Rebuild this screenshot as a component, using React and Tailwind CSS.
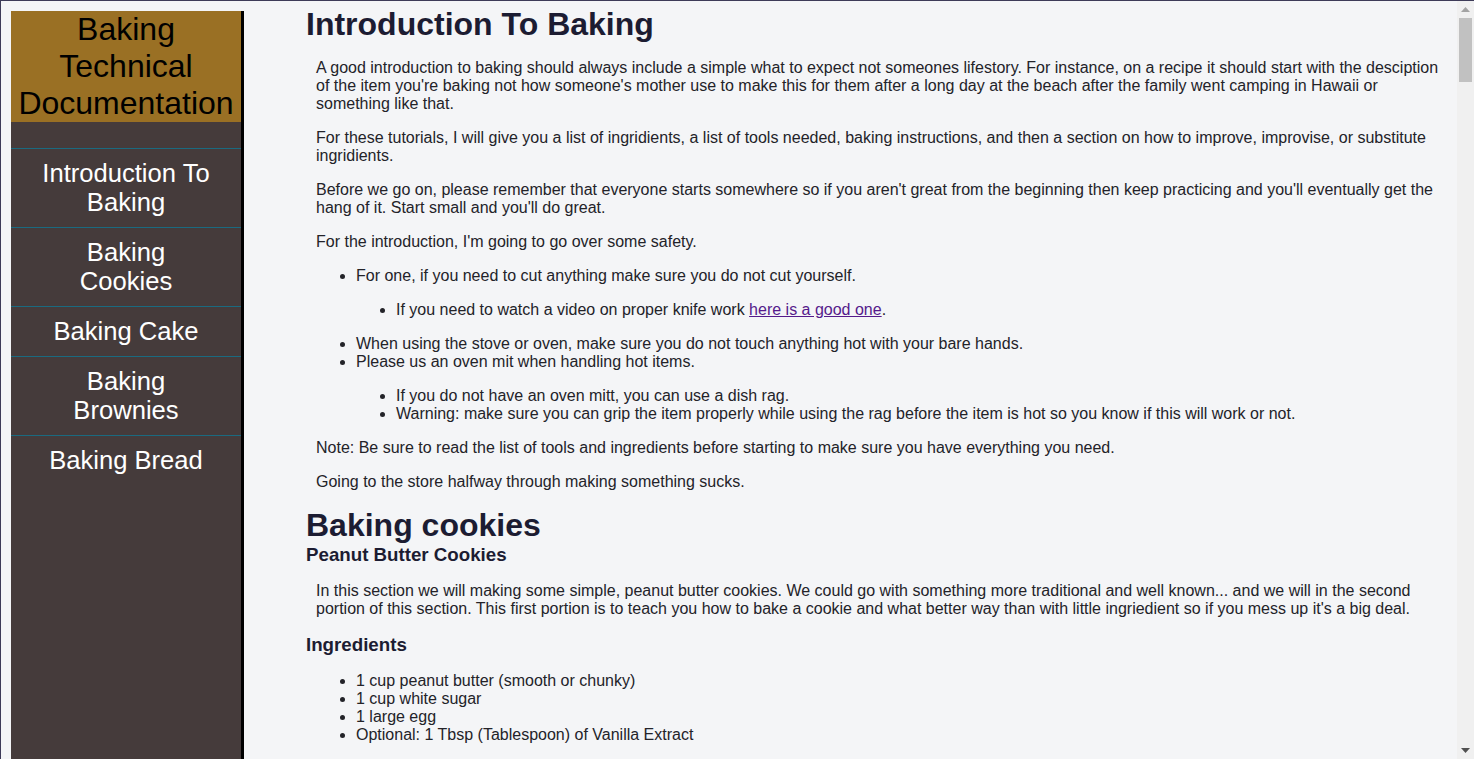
import React from 'react';

const navLinks = [
  'Introduction To Baking',
  'Baking Cookies',
  'Baking Cake',
  'Baking Brownies',
  'Baking Bread',
];

const Scrollbar = () => (
  <div className="w-[17px] shrink-0 bg-[#f0f0f0] flex flex-col">
    <div className="h-[17px] flex items-center justify-center">
      <svg width="9" height="5" viewBox="0 0 9 5">
        <polygon points="0,5 9,5 4.5,0" fill="#a3a3a3" />
      </svg>
    </div>
    <div className="h-[64px] mx-[2px] bg-[#c1c1c1]" />
    <div className="flex-1" />
    <div className="h-[17px] flex items-center justify-center">
      <svg width="9" height="5" viewBox="0 0 9 5">
        <polygon points="0,0 9,0 4.5,5" fill="#505050" />
      </svg>
    </div>
  </div>
);

const App = () => {
  return (
    <div className="h-[759px] w-[1474px] overflow-hidden flex border-t border-l border-[#3d3b58] bg-[#f4f5f7] font-['Liberation_Sans',Arial,sans-serif] text-[16px] leading-[18px] text-[#232329]">
      <div className="flex-1 flex overflow-hidden">
        {/* Sidebar */}
        <nav className="w-[233px] shrink-0 ml-[10px] mt-[10px] bg-[#453b3b] border-r-[3px] border-black flex flex-col">
          <header className="bg-[#9a7024] text-black text-[32px] leading-[37px] text-center">
            Baking Technical Documentation
          </header>
          <ul className="mt-[26px]">
            {navLinks.map((link) => (
              <li
                key={link}
                className="border-t border-[#1a6a80] py-[10px] px-[30px] text-center text-white text-[25.6px] leading-[29px]"
              >
                {link}
              </li>
            ))}
          </ul>
        </nav>

        {/* Main content */}
        <main className="flex-1 ml-[62px] pt-[5px] pr-[10px] text-[#232329]">
          <section>
            <h1 className="text-[32px] leading-[37px] font-bold text-[#1c1c32]">Introduction To Baking</h1>
            <div className="pl-[10px]">
              <p className="my-4">
                A good introduction to baking should always include a simple what to expect not someones lifestory. For instance, on a recipe it should start with the desciption of the item you're baking not how someone's mother use to make this for them after a long day at the beach after the family went camping in Hawaii or something like that.
              </p>
              <p className="my-4">
                For these tutorials, I will give you a list of ingridients, a list of tools needed, baking instructions, and then a section on how to improve, improvise, or substitute ingridients.
              </p>
              <p className="my-4">
                Before we go on, please remember that everyone starts somewhere so if you aren't great from the beginning then keep practicing and you'll eventually get the hang of it. Start small and you'll do great.
              </p>
              <p className="my-4">For the introduction, I'm going to go over some safety.</p>
              <ul className="list-disc pl-[40px] my-4">
                <li>
                  For one, if you need to cut anything make sure you do not cut yourself.
                  <ul className="list-disc pl-[40px] my-4">
                    <li>
                      If you need to watch a video on proper knife work{' '}
                      <a href="#" className="underline text-[#551a8b]">here is a good one</a>.
                    </li>
                  </ul>
                </li>
                <li>When using the stove or oven, make sure you do not touch anything hot with your bare hands.</li>
                <li>
                  Please us an oven mit when handling hot items.
                  <ul className="list-disc pl-[40px] my-4">
                    <li>If you do not have an oven mitt, you can use a dish rag.</li>
                    <li>Warning: make sure you can grip the item properly while using the rag before the item is hot so you know if this will work or not.</li>
                  </ul>
                </li>
              </ul>
              <p className="my-4">Note: Be sure to read the list of tools and ingredients before starting to make sure you have everything you need.</p>
              <p className="my-4">Going to the store halfway through making something sucks.</p>
            </div>
          </section>

          <section>
            <h1 className="text-[32px] leading-[37px] font-bold text-[#1c1c32]">Baking cookies</h1>
            <h3 className="text-[18.72px] leading-[22px] font-bold text-[#1c1c32]">Peanut Butter Cookies</h3>
            <div className="pl-[10px]">
              <p className="my-4">
                In this section we will making some simple, peanut butter cookies. We could go with something more traditional and well known... and we will in the second portion of this section. This first portion is to teach you how to bake a cookie and what better way than with little ingriedient so if you mess up it's a big deal.
              </p>
            </div>
            <h3 className="text-[18.72px] leading-[22px] font-bold text-[#1c1c32]">Ingredients</h3>
            <div className="pl-[10px]">
              <ul className="list-disc pl-[40px] mt-4">
                <li>1 cup peanut butter (smooth or chunky)</li>
                <li>1 cup white sugar</li>
                <li>1 large egg</li>
                <li>Optional: 1 Tbsp (Tablespoon) of Vanilla Extract</li>
              </ul>
            </div>
          </section>
        </main>
      </div>
      <Scrollbar />
    </div>
  );
};

export default App;
